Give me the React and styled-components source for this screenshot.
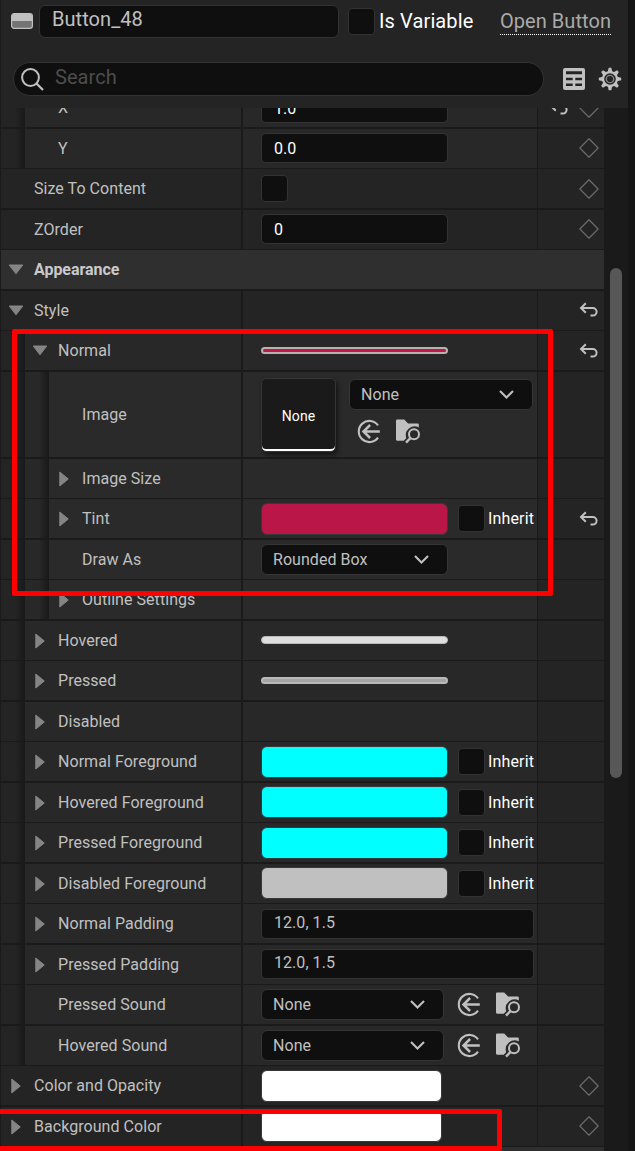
import React from "react";
import styled, { createGlobalStyle } from "styled-components";

const GlobalStyle = createGlobalStyle`
  * { box-sizing: border-box; }
  body {
    margin: 0;
    background: #151515;
    font-family: Roboto, "Liberation Sans", sans-serif;
    font-size: 16px;
    letter-spacing: 0.05px;
    color: #c0c0c0;
    overflow: hidden;
  }
`;

const Window = styled.div`
  position: relative;
  width: 635px;
  height: 1151px;
  overflow: hidden;
  background: #151515;
`;

const Panel = styled.div`
  width: 628px;
  height: 1151px;
  display: flex;
  flex-direction: column;
  background: #1a1a1a;
`;

const Header = styled.header`
  flex: none;
  height: 108px;
  padding: 5px 6px 0 13px;
  border-left: 1px solid #1a1a1a;
  background: #242424;
  font-size: 20px;
`;

const TitleBar = styled.div`
  display: flex;
  align-items: center;
  height: 33px;
  margin-left: -3px;
  > svg { margin-bottom: 1px; }
`;

const NameField = styled.div`
  width: 300px;
  height: 33px;
  margin: 0 9px 0 6px;
  padding: 0 0 4px 12px;
  border: 1px solid #333;
  border-radius: 6px;
  background: #0f0f0f;
  line-height: 26px;
`;

const VariableLabel = styled.span`
  width: 125px;
  padding: 0 0 2px 4px;
  color: #fff;
  letter-spacing: 0.12px;
  white-space: nowrap;
`;

const OpenLink = styled.a`
  height: 25px;
  margin-top: 2px;
  line-height: 22px;
  color: #aaa;
  border-bottom: 1px dotted #fff;
  white-space: nowrap;
`;

const SearchBar = styled.div`
  display: flex;
  align-items: center;
  margin: 24px 0 0 -1px;
`;

const SearchField = styled.div`
  display: flex;
  align-items: center;
  gap: 11px;
  width: 531px;
  height: 34px;
  margin-right: 19px;
  padding-left: 7px;
  border: 1px solid #333;
  border-radius: 17px;
  background: #0f0f0f;
  color: #4d4d4d;
  span { margin-top: -5px; }
`;

const Tools = styled.div`
  display: flex;
  align-items: center;
  gap: 13px;
`;

const Body = styled.div`
  flex: 1;
  min-height: 0;
  display: flex;
  overflow: hidden;
`;

const Rows = styled.div`
  width: 604px;
  margin-top: -20px;
  padding-left: 1px;
`;

const Track = styled.div`
  width: 24px;
  padding: 160px 6px 0;
`;

const Thumb = styled.div`
  width: 12px;
  height: 510px;
  border-radius: 6px;
  background: #575757;
`;

const levelColor = ["#242424", "#282828", "#2a2a2a"];

const RowBox = styled.div`
  display: flex;
  height: ${(p) => p.$height || 39}px;
  margin-bottom: ${(p) => p.$gap}px;
`;

const Indent = styled.div`
  flex: none;
  width: 24px;
  background: linear-gradient(to right, ${(p) => levelColor[p.$level]} 58%, #1a1a1a 96%);
`;

const NameCell = styled.div`
  flex: 1;
  display: flex;
  align-items: center;
  background: ${(p) => levelColor[p.$level]};
  white-space: nowrap;
`;

const ArrowSlot = styled.div`
  flex: none;
  display: flex;
  justify-content: center;
  width: 30px;
  margin-right: 3px;
`;

const ValueCell = styled.div`
  flex: none;
  display: flex;
  align-items: center;
  width: 294px;
  margin-left: 2px;
  padding: 0 0 ${(p) => (p.$gap === 1 ? 1 : 0)}px 18px;
  background: ${(p) => levelColor[p.$level]};
`;

const ExtensionCell = styled.div`
  flex: none;
  display: flex;
  align-items: center;
  justify-content: flex-end;
  gap: 10px;
  width: 66px;
  margin-left: 1px;
  padding: 0 5px ${(p) => (p.$gap === 1 ? 1 : 0)}px 0;
  background: #242424;
`;

const CategoryRow = styled.div`
  display: flex;
  align-items: center;
  height: 39px;
  margin-bottom: 2px;
  background: #2f2f2f;
  color: #cacaca;
  font-weight: 700;
  letter-spacing: -0.05px;
`;

const Field = styled.div`
  width: ${(p) => p.$width}px;
  height: 30px;
  padding-left: 12px;
  border: 1px solid #333;
  border-radius: 5px;
  background: #0f0f0f;
  color: ${(p) => (p.$muted ? "#c0c0c0" : "#fff")};
  line-height: ${(p) => (p.$muted ? 25 : 29)}px;
`;

const Select = styled.div`
  display: flex;
  align-items: center;
  justify-content: space-between;
  width: ${(p) => p.$width}px;
  height: 31px;
  padding: 0 18px 0 11px;
  border: 1px solid #353535;
  border-radius: 6px;
  background: #0f0f0f;
`;

const Check = styled.div`
  flex: none;
  width: 27px;
  height: 27px;
  border: 1px solid #333;
  border-radius: 4px;
  background: #0f0f0f;
`;

const Swatch = styled.div`
  width: ${(p) => p.$width || 187}px;
  height: 32px;
  margin-right: 10px;
  border: 1px solid #383838;
  border-radius: 6px;
  background: ${(p) => p.$color};
`;

const BrushPreview = styled.div`
  width: 187px;
  height: ${(p) => p.$height || 7}px;
  border: ${(p) => (p.$height ? 1 : 2)}px solid ${(p) => p.$edge};
  border-radius: 4px;
  background: ${(p) => p.$color};
`;

const InheritLabel = styled.span`
  margin-left: 3px;
  color: #fff;
  letter-spacing: 0.15px;
`;

const AssetThumb = styled.div`
  display: flex;
  align-items: center;
  justify-content: center;
  width: 75px;
  height: 74px;
  margin-right: 13px;
  padding-top: 2px;
  border: 1px solid #353535;
  border-radius: 5px;
  background: #1a1a1a;
  box-shadow: inset 0 -2px #fff, 2px 3px 4px rgba(0, 0, 0, 0.5);
  color: #fff;
  font-size: 14px;
`;

const AssetControls = styled.div`
  display: flex;
  flex-direction: column;
  align-self: flex-start;
  gap: 9px;
  padding-top: 7px;
`;

const AssetButtons = styled.div`
  display: flex;
  gap: 14px;
  margin-left: ${(p) => p.$inset}px;
`;

const Highlight = styled.div`
  position: absolute;
  left: ${(p) => p.$left}px;
  top: ${(p) => p.$top}px;
  width: ${(p) => p.$width}px;
  height: ${(p) => p.$height}px;
  border: 5px solid #f00;
  border-radius: 2px;
  pointer-events: none;
`;

const Icon = styled.svg`
  flex: none;
  display: block;
  fill: none;
  stroke: #c0c0c0;
  stroke-width: 2;
`;

const ButtonIcon = () => (
  <Icon width="22" height="16" viewBox="0 0 22 16">
    <rect x="0.6" y="0.6" width="20.8" height="14.8" rx="2.6" fill="#747474" strokeWidth="1.2" />
    <path d="M1 8V3a2 2 0 0 1 2-2h16a2 2 0 0 1 2 2v5z" fill="#c0c0c0" stroke="none" />
  </Icon>
);

const SearchIcon = () => (
  <Icon width="23" height="23" viewBox="0 0 23 23">
    <circle cx="9.5" cy="9.5" r="8.4" />
    <path d="M15.5 15.5L22 22" strokeWidth="2.3" />
  </Icon>
);

const TableIcon = () => (
  <Icon width="22" height="22" viewBox="0 0 22 22">
    <rect width="22" height="22" rx="2" fill="#c0c0c0" stroke="none" />
    <path
      d="M3 3.2h16v3H3zM3 9.7h6.7v2.6H3zM12.3 9.7H19v2.6h-6.7zM3 15.4h6.7v2.6H3zM12.3 15.4H19v2.6h-6.7z"
      fill="#242424"
      stroke="none"
    />
  </Icon>
);

const GearIcon = () => (
  <Icon width="24" height="24" viewBox="-12 -12 24 24">
    {[0, 45, 90, 135, 180, 225, 270, 315].map((a) => (
      <path key={a} d="M-2.3 -7L-1.3 -11.2H1.3L2.3 -7z" fill="#c0c0c0" stroke="none" transform={`rotate(${a})`} />
    ))}
    <circle r="6.9" strokeWidth="2.2" />
    <circle r="3.7" stroke="#858585" strokeWidth="1.3" />
  </Icon>
);

const Expander = ({ open }) =>
  open ? (
    <Icon width="16" height="11" viewBox="0 0 16 11">
      <path d="M1.2 1H14.8L8 9.8z" fill="#858585" stroke="#858585" strokeWidth="1" strokeLinejoin="round" />
    </Icon>
  ) : (
    <Icon width="10" height="16" viewBox="0 0 10 16">
      <path d="M0.8 1V15L9.3 8z" fill="#858585" stroke="#858585" strokeWidth="1" strokeLinejoin="round" />
    </Icon>
  );

const Chevron = () => (
  <Icon width="15" height="9" viewBox="0 0 15 9">
    <path d="M1 1L7.5 7.5L14 1" strokeWidth="2.1" />
  </Icon>
);

const Diamond = () => (
  <Icon width="20" height="20" viewBox="0 0 20 20">
    <path d="M10 0.8L19.2 10L10 19.2L0.8 10z" stroke="#6c6c6c" strokeWidth="1.3" />
  </Icon>
);

const ResetIcon = () => (
  <Icon width="20" height="16" viewBox="0 0 20 16">
    <path d="M6.8 1.3L2 6L6.8 10.7" />
    <path d="M2.2 6H13.8A3.8 3.8 0 0 1 13.8 13.6H11.5" />
  </Icon>
);

const UseIcon = () => (
  <Icon width="25" height="25" viewBox="0 0 25 25">
    <path d="M21 6.3A10.6 10.6 0 1 0 21 18.7" strokeWidth="2.1" />
    <path d="M13.1 6L6.5 12.5L13.1 19M6.8 12.5H22.8" strokeWidth="2.5" />
  </Icon>
);

const BrowseIcon = () => (
  <Icon width="25" height="25" viewBox="0 0 25 25">
    <path
      d="M0 1.6Q0 0.5 1.1 0.5H8.2L12.1 4.6H21.8Q22.8 4.6 22.8 5.6V8.4A9 9 0 0 0 10.2 19.2L7.8 21.7H1.1Q0 21.7 0 20.6z"
      fill="#c0c0c0"
      stroke="none"
    />
    <circle cx="18" cy="15.3" r="5" />
    <path d="M14.4 19.1L10 23.6" strokeWidth="2.3" />
  </Icon>
);

const AssetActions = ({ inset = 0 }) => (
  <AssetButtons $inset={inset}>
    <UseIcon />
    <BrowseIcon />
  </AssetButtons>
);

const ColorValue = ({ color }) => (
  <>
    <Swatch $color={color} />
    <Check />
    <InheritLabel>Inherit</InheritLabel>
  </>
);

const SoundValue = () => (
  <>
    <Select $width={183}>
      None <Chevron />
    </Select>
    <AssetActions inset={13} />
  </>
);

const ImageValue = () => (
  <>
    <AssetThumb>None</AssetThumb>
    <AssetControls>
      <Select $width={184}>
        None <Chevron />
      </Select>
      <AssetActions inset={8} />
    </AssetControls>
  </>
);

const Row = ({ label, level = 0, arrow, gap = 1, height, ext, children }) => (
  <RowBox $gap={gap} $height={height}>
    {Array.from({ length: level }, (_, i) => (
      <Indent key={i} $level={i} />
    ))}
    <NameCell $level={level}>
      <ArrowSlot>{arrow && <Expander open={arrow === "open"} />}</ArrowSlot>
      {label}
    </NameCell>
    <ValueCell $level={level} $gap={gap}>{children}</ValueCell>
    <ExtensionCell $gap={gap}>{ext}</ExtensionCell>
  </RowBox>
);

export default function App() {
  return (
    <Window>
      <GlobalStyle />
      <Panel>
        <Header>
          <TitleBar>
            <ButtonIcon />
            <NameField>Button_48</NameField>
            <Check />
            <VariableLabel>Is Variable</VariableLabel>
            <OpenLink>Open Button</OpenLink>
          </TitleBar>
          <SearchBar>
            <SearchField>
              <SearchIcon />
              <span>Search</span>
            </SearchField>
            <Tools>
              <TableIcon />
              <GearIcon />
            </Tools>
          </SearchBar>
        </Header>
        <Body>
          <Rows>
            <Row label="X" level={1} gap={2} ext={<><ResetIcon /><Diamond /></>}>
              <Field $width={187}>1.0</Field>
            </Row>
            <Row label="Y" level={1} ext={<Diamond />}>
              <Field $width={187}>0.0</Field>
            </Row>
            <Row label="Size To Content" gap={2} ext={<Diamond />}>
              <Check />
            </Row>
            <Row label="ZOrder" ext={<Diamond />}>
              <Field $width={187}>0</Field>
            </Row>
            <CategoryRow>
              <ArrowSlot><Expander open /></ArrowSlot>
              Appearance
            </CategoryRow>
            <Row label="Style" arrow="open" ext={<ResetIcon />} />
            <Row label="Normal" level={1} arrow="open" gap={2} ext={<ResetIcon />}>
              <BrushPreview $color="#c21748" $edge="#b9b0b0" />
            </Row>
            <Row label="Image" level={2} height={85} gap={2}>
              <ImageValue />
            </Row>
            <Row label="Image Size" level={2} arrow="closed" />
            <Row label="Tint" level={2} arrow="closed" gap={2} ext={<ResetIcon />}>
              <ColorValue color="#ba1648" />
            </Row>
            <Row label="Draw As" level={2}>
              <Select $width={187}>
                Rounded Box <Chevron />
              </Select>
            </Row>
            <Row label="Outline Settings" level={2} arrow="closed" gap={2} />
            <Row label="Hovered" level={1} arrow="closed">
              <BrushPreview $color="#dedede" $height={8} $edge="#b8b8b8" />
            </Row>
            <Row label="Pressed" level={1} arrow="closed" gap={2}>
              <BrushPreview $color="#a5a5a5" $edge="#b8b8b8" />
            </Row>
            <Row label="Disabled" level={1} arrow="closed" />
            <Row label="Normal Foreground" level={1} arrow="closed" gap={2}>
              <ColorValue color="#00ffff" />
            </Row>
            <Row label="Hovered Foreground" level={1} arrow="closed">
              <ColorValue color="#00ffff" />
            </Row>
            <Row label="Pressed Foreground" level={1} arrow="closed" gap={2}>
              <ColorValue color="#00ffff" />
            </Row>
            <Row label="Disabled Foreground" level={1} arrow="closed">
              <ColorValue color="#c0c0c0" />
            </Row>
            <Row label="Normal Padding" level={1} arrow="closed" gap={2}>
              <Field $width={273} $muted>12.0, 1.5</Field>
            </Row>
            <Row label="Pressed Padding" level={1} arrow="closed">
              <Field $width={273} $muted>12.0, 1.5</Field>
            </Row>
            <Row label="Pressed Sound" level={1} gap={2}>
              <SoundValue />
            </Row>
            <Row label="Hovered Sound" level={1}>
              <SoundValue />
            </Row>
            <Row label="Color and Opacity" arrow="closed" gap={2} ext={<Diamond />}>
              <Swatch $color="#fff" $width={181} />
            </Row>
            <Row label="Background Color" arrow="closed" ext={<Diamond />}>
              <Swatch $color="#fff" $width={181} />
            </Row>
            <CategoryRow />
          </Rows>
          <Track>
            <Thumb />
          </Track>
        </Body>
      </Panel>
      <Highlight $left={12} $top={329} $width={541} $height={267} />
      <Highlight $left={-10} $top={1109} $width={512} $height={42} />
    </Window>
  );
}
